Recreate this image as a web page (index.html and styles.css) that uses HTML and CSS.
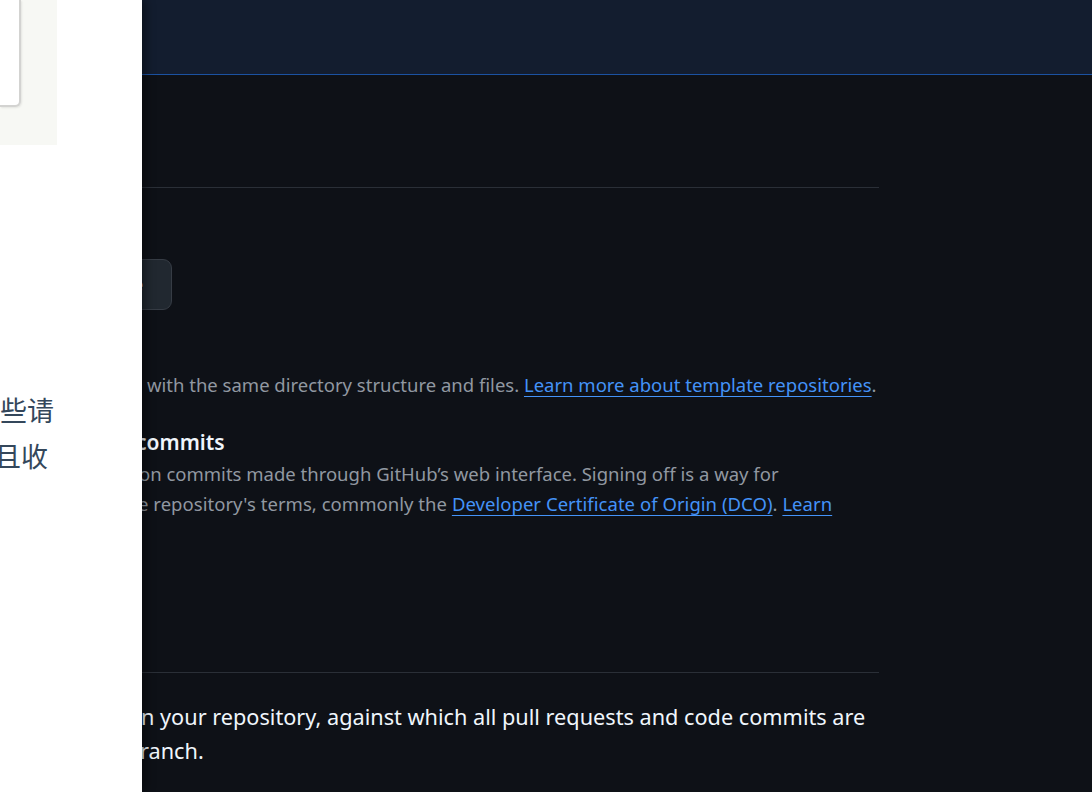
FILE: index.html
```html
<!DOCTYPE html>
<html lang="en">
<head>
<meta charset="utf-8">
<title>Settings</title>
<link rel="stylesheet" href="styles.css">
</head>
<body>
<div class="app">
  <aside class="side">
    <div class="thumb"><div class="thumb-card"></div></div>
    <div class="cn">
      <div class="cn-line cn-l1">些请</div>
      <div class="cn-line cn-l2">且收</div>
    </div>
  </aside>
  <main class="page">
    <header class="topbar"></header>
    <section class="content">
      <div class="rule rule-1"></div>
      <div class="btn">Rename</div>
      <p class="muted line line-template">with the same directory structure and files. <a class="link" href="#">Learn more about template repositories</a>.</p>
      <h3 class="title">commits</h3>
      <p class="muted line line-a">on commits made through GitHub’s web interface. Signing off is a way for</p>
      <p class="muted line line-b">e repository's terms, commonly the <a class="link" href="#">Developer Certificate of Origin (DCO)</a>. <a class="link" href="#">Learn</a></p>
      <div class="rule rule-2"></div>
      <p class="body-text bt-1">n your repository, against which all pull requests and code commits are</p>
      <p class="body-text bt-2">ranch.</p>
    </section>
  </main>
</div>
</body>
</html>
```
FILE: styles.css
```css
html, body {
  margin: 0;
  padding: 0;
  height: 100%;
  overflow: hidden;
}
body {
  font-family: "Noto Sans", "Open Sans", sans-serif;
  background: #0e1117;
}
.app {
  display: flex;
  width: 1092px;
  height: 792px;
}
.side {
  flex: 0 0 142px;
  background: #ffffff;
  position: relative;
  z-index: 2;
  box-shadow: 3px 0 10px rgba(0, 0, 0, 0.45);
  overflow: hidden;
}
.thumb {
  width: 57px;
  height: 145px;
  background: #f7f8f4;
}
.thumb-card {
  width: 19px;
  height: 105px;
  background: #ffffff;
  border: 2px solid #d3d3d1;
  border-left: 0;
  border-top: 0;
  border-radius: 0 0 6px 0;
  box-shadow: 1px 1px 2px rgba(0, 0, 0, 0.08);
}
.cn {
  margin-top: 242px;
  font-family: "Noto Sans CJK SC", "Noto Sans", sans-serif;
  font-size: 27px;
  line-height: 46px;
  color: #34475b;
  white-space: nowrap;
}
.cn-l1 { margin-left: 0; }
.cn-l2 { margin-left: -6px; }

.page {
  flex: 1;
  overflow: hidden;
  background: #0e1117;
}
.topbar {
  height: 74px;
  background: #131d2f;
  border-bottom: 1px solid #1b52a2;
}
.content {
  padding-top: 112px;
}
.rule {
  width: 737px;
  height: 0;
  border-top: 1px solid #2a2f37;
}
.btn {
  display: inline-block;
  box-sizing: border-box;
  height: 51px;
  margin-top: 71px;
  margin-left: -100px;
  padding: 0 28px;
  background: #212830;
  border: 1px solid #363c45;
  border-radius: 9px;
  color: #f0f6fc;
  font-size: 18px;
  font-weight: 600;
  line-height: 49px;
  vertical-align: top;
}
.line {
  margin: 0;
  white-space: nowrap;
  font-size: 18.5px;
  line-height: 30px;
}
.muted { color: #9198a1; }
.link {
  color: #4493f8;
  text-decoration: underline;
  text-underline-offset: 4px;
  text-decoration-thickness: 1px;
}
.line-template {
  margin-top: 60px;
  margin-left: 5px;
}
.title {
  margin: 26px 0 0 -6px;
  font-size: 21px;
  font-weight: 600;
  line-height: 32px;
  color: #f0f6fc;
  white-space: nowrap;
}
.line-a {
  margin-top: 1px;
  margin-left: -3px;
}
.line-b {
  margin-left: -4px;
  letter-spacing: 0.04px;
}
.rule-2 {
  margin-top: 153px;
}
.body-text {
  margin: 0;
  font-size: 21.7px;
  line-height: 34px;
  color: #f0f6fc;
  white-space: nowrap;
}
.bt-1 {
  margin-top: 26.6px;
  margin-left: -1px;
}
.bt-2 {
  margin-left: -2px;
}
```
